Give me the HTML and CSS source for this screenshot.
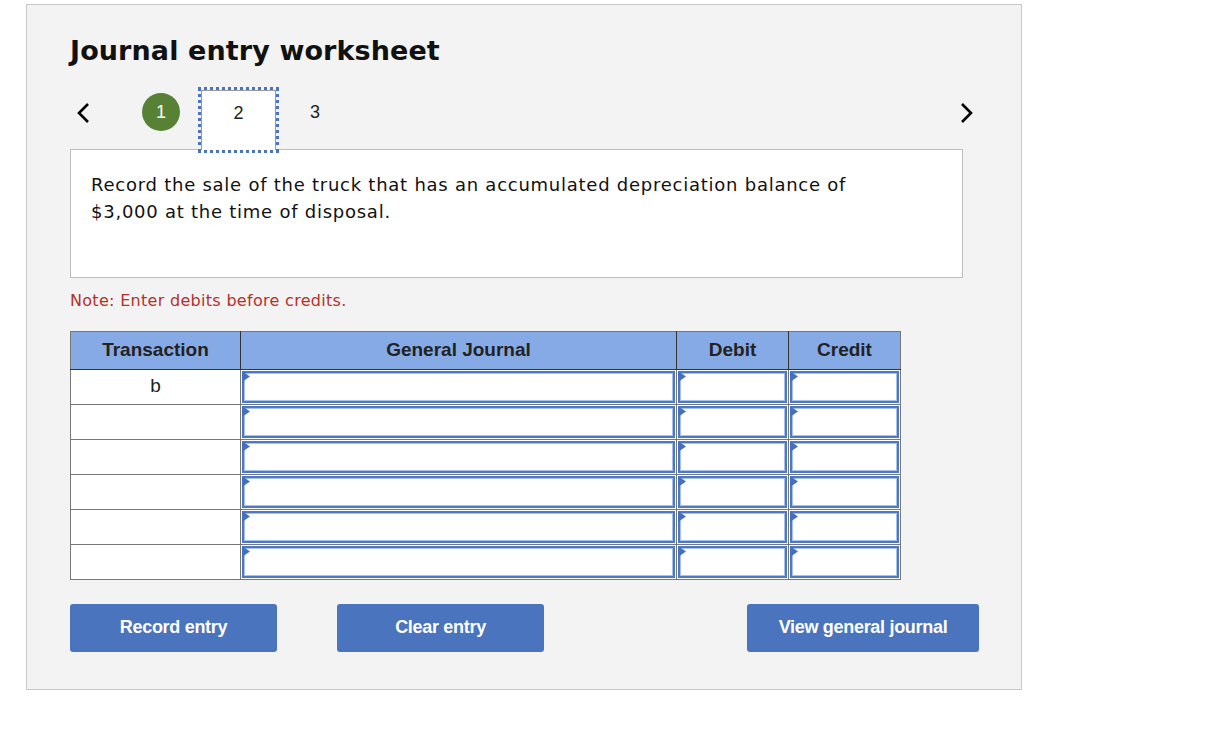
FILE: index.html
```html
<!DOCTYPE html>
<html>
<head>
<meta charset="utf-8">
<link rel="stylesheet" href="styles.css">
</head>
<body>
<div class="panel">
  <h1 class="title">Journal entry worksheet</h1>
  <div class="nav">
    <span class="chev chev-left"><svg width="14" height="22" viewBox="0 0 14 22"><polyline points="12,2 3,11 12,20" fill="none" stroke="#000" stroke-width="2.6"/></svg></span>
    <span class="step done">1</span>
    <span class="step tab">2</span>
    <span class="step plain">3</span>
    <span class="chev chev-right"><svg width="14" height="22" viewBox="0 0 14 22"><polyline points="2,2 11,11 2,20" fill="none" stroke="#000" stroke-width="2.6"/></svg></span>
  </div>
  <div class="question">Record the sale of the truck that has an accumulated depreciation balance of<br>$3,000 at the time of disposal.</div>
  <p class="note">Note: Enter debits before credits.</p>
  <table class="journal">
    <thead>
      <tr><th class="c-tr">Transaction</th><th class="c-gj">General Journal</th><th class="c-amt">Debit</th><th class="c-amt">Credit</th></tr>
    </thead>
    <tbody>
      <tr><td class="tr">b</td><td class="in"><div class="box"><svg class="flag" width="8" height="11" viewBox="0 0 8 11"><polygon points="0,0 8,5.5 0,11" fill="#4570c0"/></svg></div></td><td class="in"><div class="box"><svg class="flag" width="8" height="11" viewBox="0 0 8 11"><polygon points="0,0 8,5.5 0,11" fill="#4570c0"/></svg></div></td><td class="in"><div class="box"><svg class="flag" width="8" height="11" viewBox="0 0 8 11"><polygon points="0,0 8,5.5 0,11" fill="#4570c0"/></svg></div></td></tr>
      <tr><td class="tr"></td><td class="in"><div class="box"><svg class="flag" width="8" height="11" viewBox="0 0 8 11"><polygon points="0,0 8,5.5 0,11" fill="#4570c0"/></svg></div></td><td class="in"><div class="box"><svg class="flag" width="8" height="11" viewBox="0 0 8 11"><polygon points="0,0 8,5.5 0,11" fill="#4570c0"/></svg></div></td><td class="in"><div class="box"><svg class="flag" width="8" height="11" viewBox="0 0 8 11"><polygon points="0,0 8,5.5 0,11" fill="#4570c0"/></svg></div></td></tr>
      <tr><td class="tr"></td><td class="in"><div class="box"><svg class="flag" width="8" height="11" viewBox="0 0 8 11"><polygon points="0,0 8,5.5 0,11" fill="#4570c0"/></svg></div></td><td class="in"><div class="box"><svg class="flag" width="8" height="11" viewBox="0 0 8 11"><polygon points="0,0 8,5.5 0,11" fill="#4570c0"/></svg></div></td><td class="in"><div class="box"><svg class="flag" width="8" height="11" viewBox="0 0 8 11"><polygon points="0,0 8,5.5 0,11" fill="#4570c0"/></svg></div></td></tr>
      <tr><td class="tr"></td><td class="in"><div class="box"><svg class="flag" width="8" height="11" viewBox="0 0 8 11"><polygon points="0,0 8,5.5 0,11" fill="#4570c0"/></svg></div></td><td class="in"><div class="box"><svg class="flag" width="8" height="11" viewBox="0 0 8 11"><polygon points="0,0 8,5.5 0,11" fill="#4570c0"/></svg></div></td><td class="in"><div class="box"><svg class="flag" width="8" height="11" viewBox="0 0 8 11"><polygon points="0,0 8,5.5 0,11" fill="#4570c0"/></svg></div></td></tr>
      <tr><td class="tr"></td><td class="in"><div class="box"><svg class="flag" width="8" height="11" viewBox="0 0 8 11"><polygon points="0,0 8,5.5 0,11" fill="#4570c0"/></svg></div></td><td class="in"><div class="box"><svg class="flag" width="8" height="11" viewBox="0 0 8 11"><polygon points="0,0 8,5.5 0,11" fill="#4570c0"/></svg></div></td><td class="in"><div class="box"><svg class="flag" width="8" height="11" viewBox="0 0 8 11"><polygon points="0,0 8,5.5 0,11" fill="#4570c0"/></svg></div></td></tr>
      <tr><td class="tr"></td><td class="in"><div class="box"><svg class="flag" width="8" height="11" viewBox="0 0 8 11"><polygon points="0,0 8,5.5 0,11" fill="#4570c0"/></svg></div></td><td class="in"><div class="box"><svg class="flag" width="8" height="11" viewBox="0 0 8 11"><polygon points="0,0 8,5.5 0,11" fill="#4570c0"/></svg></div></td><td class="in"><div class="box"><svg class="flag" width="8" height="11" viewBox="0 0 8 11"><polygon points="0,0 8,5.5 0,11" fill="#4570c0"/></svg></div></td></tr>
    </tbody>
  </table>
  <div class="actions">
    <button class="btn btn-record">Record entry</button>
    <button class="btn btn-clear">Clear entry</button>
    <button class="btn btn-view">View general journal</button>
  </div>
</div>
</body>
</html>
```
FILE: styles.css
```css
html, body { margin: 0; padding: 0; background: #fff; }
body { font-family: "DejaVu Sans", Verdana, sans-serif; color: #000; }

.panel {
  margin: 4px 0 0 26px;
  width: 909px;
  padding: 0 42px 37px 43px;
  background: #f3f3f3;
  border: 1px solid #c8c8c8;
}

.title {
  margin: 0;
  padding-top: 29px;
  font-size: 27px;
  line-height: 34px;
  font-weight: bold;
  letter-spacing: 0.1px;
  color: #111;
}

.nav {
  display: flex;
  align-items: flex-start;
  height: 60px;
  margin-top: 22px;
  width: 893px;
  position: relative;
  z-index: 1;
}
.chev { display: block; margin-top: 12px; }
.chev-left { margin-left: 6px; }
.chev-right { margin-left: auto; margin-right: -11px; }

.step {
  font-family: "Liberation Sans", Arial, sans-serif;
  font-size: 18px;
  color: #222;
  display: flex;
  align-items: center;
  justify-content: center;
}
.done {
  width: 38px; height: 38px;
  margin-top: 3px;
  margin-left: 52px;
  border-radius: 50%;
  background: #578236;
  color: #fff;
}
.tab {
  width: 75px;
  height: 60px;
  margin-left: 21px;
  background: #fff;
  border: 1px solid #999;
  border-bottom: none;
  align-items: flex-start;
  padding-top: 12px;
  box-sizing: border-box;
  outline: 3px dotted #4a73c4;
  outline-offset: 0px;
}
.plain { margin-left: 34px; margin-top: 12px; }

.question {
  width: 851px;
  height: 106px;
  margin-top: -1px;
  padding: 21px 20px 0 20px;
  background: #fff;
  border: 1px solid #bdbdbd;
  font-size: 18px;
  letter-spacing: 0.75px;
  line-height: 27px;
  color: #111;
}

.note {
  margin: 13px 0 0 0;
  font-size: 16px;
  letter-spacing: 0.3px;
  line-height: 20px;
  color: #b3312a;
}

.journal {
  margin-top: 20px;
  border-collapse: collapse;
  width: 831px;
  table-layout: fixed;
  font-family: "Liberation Sans", Arial, sans-serif;
  border: 1px solid #777;
}
.journal th {
  background: #86aae6;
  height: 35px;
  padding: 0 0 2px 0;
  font-size: 19px;
  font-weight: bold;
  color: #222;
  border: 1px solid #333;
  border-top-color: #777;
}
.journal th:first-child { border-left-color: #777; }
.journal th:last-child { border-right-color: #777; }
.c-tr { width: 169px; }
.c-gj { width: 435px; }
.c-amt { width: 111px; }

.journal td {
  height: 34px;
  padding: 0;
  border: 1px solid #777;
  background: #fff;
}
.journal td.tr {
  text-align: center;
  font-size: 19px;
  color: #222;
  vertical-align: top;
  padding-top: 5px;
  height: 29px;
}
.journal td.in { padding: 1px; height: 32px; }
.box {
  position: relative;
  height: 32px;
  box-sizing: border-box;
  border: 2px solid #4d78c6;
  box-shadow: inset 0 0 0 1px #a8c0ec;
  background: #fff;
}
.flag {
  position: absolute;
  left: -2px;
  top: -2px;
  display: block;
}

.actions {
  display: flex;
  margin-top: 24px;
}
.btn {
  height: 48px;
  border: none;
  border-radius: 3px;
  background: #4a74be;
  color: #fff;
  font-family: "Liberation Sans", Arial, sans-serif;
  font-weight: bold;
  font-size: 18px;
  letter-spacing: -0.3px;
  padding: 0 0 2px 0;
}
.btn-record { width: 207px; }
.btn-clear { width: 207px; margin-left: 60px; }
.btn-view { width: 232px; margin-left: auto; }
```
